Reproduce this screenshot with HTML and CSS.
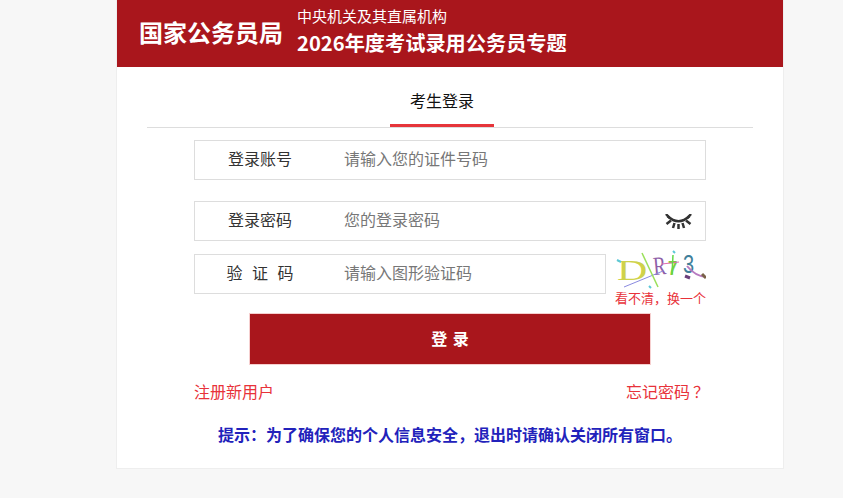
FILE: index.html
```html
<!DOCTYPE html>
<html lang="zh-CN">
<head>
  <meta charset="UTF-8" />
  <title>考生登录</title>
  <link rel="stylesheet" href="styles.css">
</head>
<body>

  <div class="wrap">
    <header class="top">
      <div class="org">国家公务员局</div>
      <div class="top-text">
        <div class="top-sub">中央机关及其直属机构</div>
        <div class="top-title">2026年度考试录用公务员专题</div>
      </div>
    </header>

    <div class="tabs">
      <a href="#" class="tab">考生登录</a>
    </div>

    <form class="login">
      <div class="field">
        <label class="field-label">登录账号</label>
        <input class="field-input" type="text" placeholder="请输入您的证件号码">
      </div>

      <div class="field field-pwd">
        <label class="field-label">登录密码</label>
        <input class="field-input" type="password" placeholder="您的登录密码">
        <svg class="eye" width="27" height="15" viewBox="0 0 27 15" fill="none" stroke="#333" stroke-width="2.500">
          <path d="M2.500 2 Q13.500 12.500 24.500 2"/>
          <path d="M1 0 L4.500 4M26 0 L22.500 4M1.500 10 L6 6.500M25.500 10 L21 6.500M8 14 L9.500 9M19 14 L17.500 9M13.500 15 L13.500 10"/>
        </svg>
      </div>

      <div class="code-row">
        <div class="field field-code">
          <label class="field-label label-spaced">验 证 码</label>
          <input class="field-input" type="text" placeholder="请输入图形验证码">
        </div>
        <div class="captcha">
          <svg class="captcha-img" width="92" height="40" viewBox="0 0 92 40" fill="none">
            <text class="c-d" transform="translate(3 30) scale(1.400 1)">D</text>
            <text class="c-r" transform="translate(40 25) rotate(-5) scale(0.950 1.300)">R</text>
            <text class="c-7" transform="translate(54 25) scale(1 1.150)">7</text>
            <text class="c-3" transform="translate(69 23) scale(1 1.300)">3</text>
            <path d="M10 37 L49 21" stroke="#8a8ae0"/>
            <path d="M28 3 L44 37" stroke="#9be05a" stroke-width="1.500"/>
            <path d="M48 14 L65 12" stroke="#e06ab0"/>
            <path d="M59 5 L58 24" stroke="#62d94a" stroke-width="1.500"/>
            <path d="M73 16 Q81 26 92 27" stroke="#b77ac0" stroke-width="2"/>
            <path d="M88 24 L92 28" stroke="#7a6248" stroke-width="3"/>
            <path d="M3 10 L7 12M59 1 L61 3M35 36 L37 38" stroke="#5cc8d8" stroke-width="2"/>
            <path d="M71 26 L76 28" stroke="#6b3f7a" stroke-width="3"/>
          </svg>
          <a href="#" class="captcha-link">看不清<span class="tc">，</span>换一个</a>
        </div>
      </div>

      <button class="submit" type="button">登 录</button>

      <div class="links">
        <a href="#">注册新用户</a>
        <a href="#">忘记密码<span class="qm">？</span></a>
      </div>
    </form>

    <p class="tip">提示：为了确保您的个人信息安全，退出时请确认关闭所有窗口。</p>
  </div>

</body>
</html>
```

FILE: styles.css
```css
:root {
  --red: #a9161c;
  --link: #e8323a;
  --line: #dddddd;
}

body {
  margin: 0;
  background: #f7f7f7;
  color: #333;
  font-family: "Noto Sans CJK SC", "Liberation Sans", sans-serif;
  font-size: 16px;
}

a {
  text-decoration: none;
}

.tc {
  font-family: "Noto Sans CJK TC", sans-serif;
}

.qm {
  font-family: "Noto Sans CJK TC", sans-serif;
  margin-left: 3px;
  margin-right: -3px;
}

.wrap {
  box-sizing: border-box;
  width: 668px;
  height: 469px;
  margin-left: 116px;
  background: #fff;
  border: 1px solid #eeeeee;
  border-top: none;
}

.top {
  display: flex;
  align-items: center;
  height: 67px;
  padding: 0 0 4px 22px;
  box-sizing: border-box;
  background: var(--red);
  color: #fff;
}

.org {
  width: 158px;
  font-size: 24px;
  font-weight: 700;
  line-height: 32px;
}

.top-sub {
  font-size: 15px;
  line-height: 20px;
  margin-top: -1px;
}

.top-title {
  font-size: 20.200px;
  font-weight: 700;
  line-height: 28px;
  margin-top: 3px;
}

.tabs {
  height: 60px;
  margin: 0 30px 12px;
  border-bottom: 1px solid var(--line);
}

.tab {
  box-sizing: border-box;
  display: block;
  width: 104px;
  height: 60px;
  margin-left: 243px;
  padding-top: 21px;
  border-bottom: 3px solid #e6353a;
  color: #111;
  line-height: 24px;
  text-align: center;
}

.login {
  width: 512px;
  margin-left: 77px;
}

.field {
  box-sizing: border-box;
  display: flex;
  align-items: center;
  height: 40px;
  border: 1px solid var(--line);
}

.field-pwd {
  margin-top: 21px;
}

.field-code {
  width: 412px;
  flex: none;
}

.field-label {
  width: 130px;
  padding-bottom: 5px;
  color: #333;
  text-align: center;
}

.label-spaced {
  word-spacing: 6px;
}

.field-input {
  flex: 1;
  min-width: 0;
  padding: 0 0 5px 19px;
  border: none;
  outline: none;
  background: transparent;
  font: inherit;
  color: #333;
}

.field-input::placeholder {
  color: #777;
  opacity: 1;
}

.eye {
  flex: none;
  margin-right: 13px;
}

.code-row {
  display: flex;
  height: 40px;
  margin-top: 13px;
}

.captcha {
  width: 92px;
  height: 40px;
  margin-left: 8px;
  text-align: right;
}

.captcha-img {
  display: block;
  margin-top: -4px;
}

.c-d {
  font: 400 30px "Liberation Serif", serif;
  fill: #cfd24a;
}

.c-r {
  font: 400 20px "Liberation Serif", serif;
  fill: #8f5fa8;
}

.c-7 {
  font: 700 17px "Liberation Sans", sans-serif;
  fill: #7ecb3c;
}

.c-3 {
  font: 400 20px "Liberation Sans", sans-serif;
  fill: #3f7f9a;
}

.captcha-link {
  display: block;
  margin-top: -1px;
  color: var(--link);
  font-size: 13px;
  line-height: 18px;
  white-space: nowrap;
}

.submit {
  display: block;
  box-sizing: border-box;
  width: 402px;
  height: 52px;
  margin: 19px 0 0 55px;
  padding-bottom: 3px;
  border: 1px solid #f6cfcf;
  background: var(--red);
  color: #fff;
  font: inherit;
  font-weight: 700;
  word-spacing: 2px;
  cursor: pointer;
}

.links {
  display: flex;
  justify-content: space-between;
  margin-top: 14px;
  line-height: 24px;
  white-space: nowrap;
}

.links a {
  color: var(--link);
}

.tip {
  margin: 19px 0 0;
  color: #2222bb;
  font-weight: 700;
  line-height: 24px;
  text-align: center;
}
```
